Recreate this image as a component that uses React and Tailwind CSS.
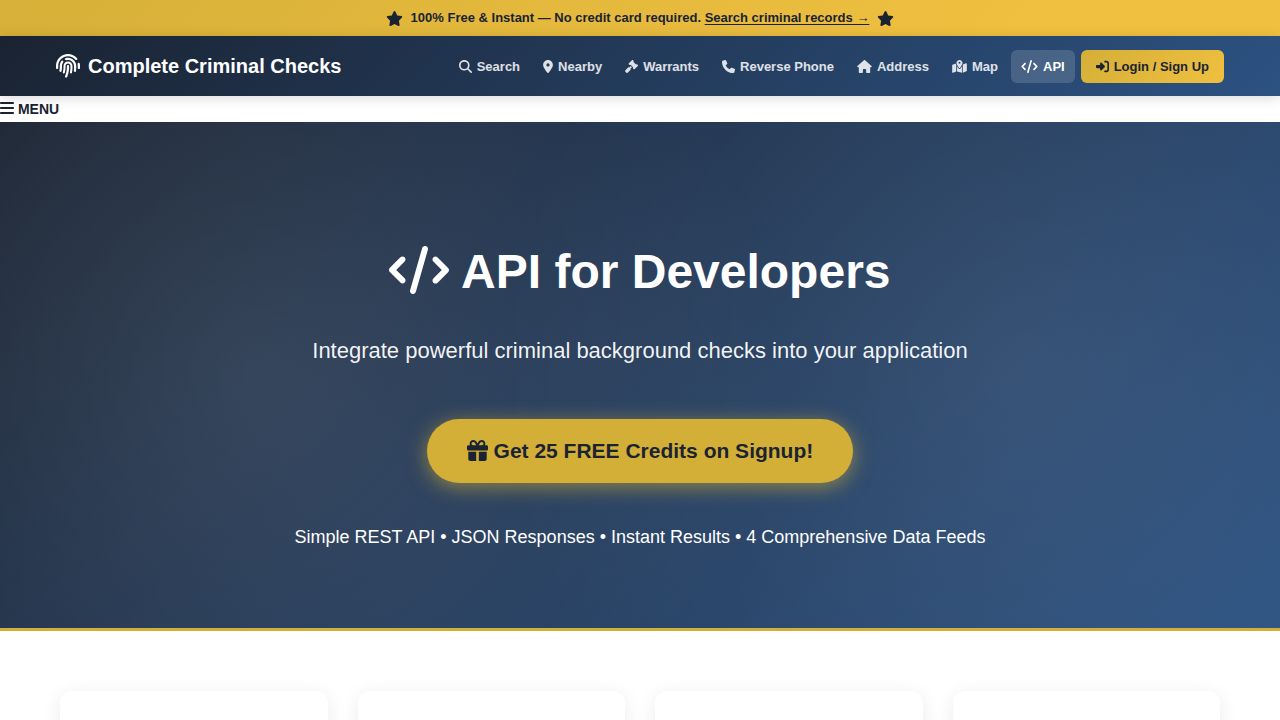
import {
  FaStar,
  FaFingerprint,
  FaMagnifyingGlass,
  FaLocationDot,
  FaGavel,
  FaPhone,
  FaHouse,
  FaMapLocationDot,
  FaCode,
  FaRightToBracket,
  FaBars,
  FaGift,
} from "react-icons/fa6";

const links = [
  { label: "Search", Icon: FaMagnifyingGlass, size: "h-[13px] w-[13px]" },
  { label: "Nearby", Icon: FaLocationDot, size: "h-[13px] w-[10px]" },
  { label: "Warrants", Icon: FaGavel, size: "h-[13px] w-[13px]" },
  { label: "Reverse Phone", Icon: FaPhone, size: "h-[13px] w-[13px]" },
  { label: "Address", Icon: FaHouse, size: "h-[13px] w-[15px]" },
  { label: "Map", Icon: FaMapLocationDot, size: "h-[13px] w-[15px]" },
  { label: "API", Icon: FaCode, size: "h-[13px] w-[17px]", active: true },
];

const feeds = ["one", "two", "three", "four"];

function PromoBanner() {
  return (
    <div className="flex h-9 items-center justify-center gap-2 bg-[linear-gradient(135deg,#d6b038_0%,#f0c040_80%,#f0c040_100%)] text-[13px] font-bold">
      <FaStar className="h-[15px] w-[17px]" />
      <p>
        100% Free &amp; Instant — No credit card required.{" "}
        <a href="#search" className="underline underline-offset-2">
          Search criminal records →
        </a>
      </p>
      <FaStar className="h-[15px] w-[17px]" />
    </div>
  );
}

function Header() {
  return (
    <header className="relative bg-[linear-gradient(135deg,#1a2332_0%,#2c5282_100%)] shadow-[0_2px_12px_rgba(0,0,0,0.15)]">
      <div className="mx-auto flex h-15 max-w-[1200px] items-center justify-between px-4">
        <a href="#home" className="flex items-center gap-2 text-xl font-bold text-white">
          <FaFingerprint className="h-6 w-6" />
          Complete Criminal Checks
        </a>
        <nav className="flex items-center gap-[3px] text-[13px] leading-[17px] font-bold">
          {links.map(({ label, Icon, size, active }) => (
            <a
              key={label}
              href={"#" + label.toLowerCase().replace(" ", "-")}
              className={
                active
                  ? "flex items-center gap-[5px] rounded-md bg-white/15 px-2.5 py-2 text-white"
                  : "flex items-center gap-[5px] rounded-md px-2.5 py-2 text-white/85"
              }
            >
              <Icon className={size} />
              {label}
            </a>
          ))}
          <a
            href="#login"
            className="ml-[3px] flex items-center gap-[5px] rounded-md bg-[linear-gradient(135deg,#d4af37,#f0c040)] px-[15px] py-2 text-[#1a2332]"
          >
            <FaRightToBracket className="h-[13px] w-[13px]" />
            Login / Sign Up
          </a>
        </nav>
      </div>
    </header>
  );
}

function Hero() {
  return (
    <section className="border-b-3 border-[#d4af37] bg-[radial-gradient(circle_at_20%_50%,rgba(255,255,255,0.1)_0%,transparent_50%),radial-gradient(circle_at_80%_50%,rgba(255,255,255,0.08)_0%,transparent_50%),linear-gradient(135deg,#1a2332_0%,#2c5282_100%)] text-white">
      <div className="flex flex-col items-center px-5 pt-[120px] pb-[77px] text-center">
        <h1 className="text-5xl leading-[60px] font-bold">
          <FaCode className="inline-block h-12 w-[60px] align-[-0.125em]" /> API for Developers
        </h1>
        <p className="mt-[31px] text-[22px] leading-9 text-white/95">
          Integrate powerful criminal background checks into your application
        </p>
        <a
          href="#signup"
          className="mt-[50px] rounded-full bg-[#d4af37] px-10 text-[21px] leading-[64px] font-bold text-[#1a2332] shadow-[0_4px_20px_rgba(212,175,55,0.6)]"
        >
          <FaGift className="inline-block h-[21px] w-[21px] align-[-0.125em]" /> Get 25 FREE
          Credits on Signup!
        </a>
        <p className="mt-10 text-lg leading-7">
          Simple REST API • JSON Responses • Instant Results • 4 Comprehensive Data Feeds
        </p>
      </div>
    </section>
  );
}

export default function App() {
  return (
    <div className="bg-white font-['Liberation_Sans',Arial,sans-serif] text-[#1a2332]">
      <PromoBanner />
      <Header />
      <button type="button" className="block text-sm leading-[26px] font-bold">
        <FaBars className="inline-block h-4 w-[14px] align-[-2px]" /> MENU
      </button>
      <Hero />
      <main className="mx-auto grid max-w-[1200px] grid-cols-4 gap-[30px] px-5 py-15">
        {feeds.map((feed) => (
          <div
            key={feed}
            className="h-60 rounded-xl bg-white shadow-[0_4px_20px_rgba(0,0,0,0.08)]"
          />
        ))}
      </main>
    </div>
  );
}
